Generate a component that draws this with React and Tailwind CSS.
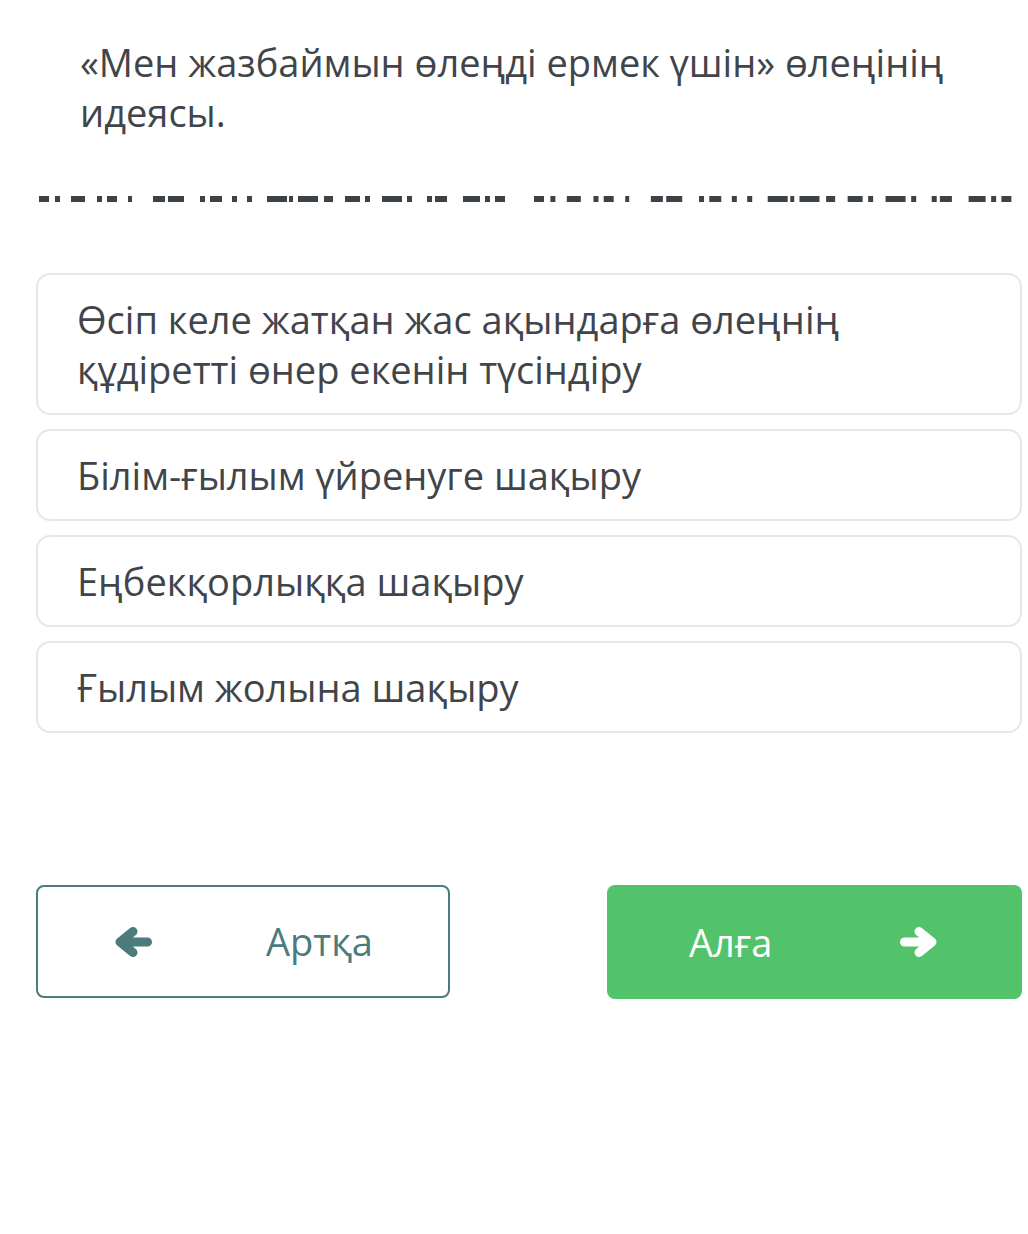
import React from "react";

const dashes = [
  [39, 10], [55, 5], [71, 14], [97, 5], [107, 10], [128, 4],
  [153, 12], [168, 16], [200, 5], [210, 12], [232, 5], [247, 5],
  [267, 20], [289, 4], [298, 20], [324, 9], [345, 15], [365, 5],
  [382, 20], [407, 5], [427, 5], [435, 12], [463, 17], [485, 5], [495, 10],
];

const options = [
  "Өсіп келе жатқан жас ақындарға өлеңнің құдіретті өнер екенін түсіндіру",
  "Білім-ғылым үйренуге шақыру",
  "Еңбекқорлыққа шақыру",
  "Ғылым жолына шақыру",
];

const DashedLine = () => (
  <svg width="1028" height="12" viewBox="0 0 1028 12" className="block">
    {dashes.map(([x, w], i) => (
      <rect key={"a" + i} x={x} y="3" width={w} height="6" fill="#3d4247" />
    ))}
    {dashes.map(([x, w], i) => (
      <rect
        key={"b" + i}
        x={534 + (x - 39) * 1.025}
        y="3"
        width={w}
        height="6"
        fill="#3d4247"
      />
    ))}
  </svg>
);

const Arrow = ({ left }) => (
  <svg
    width="38"
    height="32"
    viewBox="0 0 38 32"
    className={left ? "" : "-scale-x-100"}
  >
    <path
      d="M33.5 16 H9 M19 5.5 L6 16 L19 26.5"
      fill="none"
      stroke="currentColor"
      strokeWidth="9"
      strokeLinecap="round"
      strokeLinejoin="round"
    />
  </svg>
);

export default function App() {
  return (
    <div
      className="w-[1028px] h-[1234px] bg-white text-[#41454a]"
      style={{ fontFamily: '"Open Sans", "Noto Sans", sans-serif' }}
    >
      <div className="pl-[80px] pr-[60px] pt-[37px] text-[38px] leading-[50px]">
        «Мен жазбаймын өлеңді ермек үшін» өлеңінің идеясы.
      </div>

      <div className="mt-[56px]">
        <DashedLine />
      </div>

      <div className="mt-[68px] pl-[36px] pr-[6px] flex flex-col gap-[14px]">
        {options.map((text, i) => (
          <div
            key={i}
            className="border-2 border-[#e6e7e8] rounded-[14px] pl-[39px] pr-[160px] py-[19px] text-[38px] leading-[50px]"
          >
            {text}
          </div>
        ))}
      </div>

      <div className="mt-[152px] pl-[36px] pr-[6px] flex justify-between">
        <button className="w-[414px] h-[113px] border-2 border-[#4b7b7b] rounded-[8px] flex items-center text-[#4b7b7b] text-[38px]">
          <span className="ml-[76px] flex">
            <Arrow left />
          </span>
          <span className="ml-[114px]">Артқа</span>
        </button>
        <button className="w-[415px] h-[114px] bg-[#52c26b] rounded-[8px] flex items-center text-white text-[38px]">
          <span className="ml-[82px]">Алға</span>
          <span className="ml-[128px] flex">
            <Arrow />
          </span>
        </button>
      </div>
    </div>
  );
}
